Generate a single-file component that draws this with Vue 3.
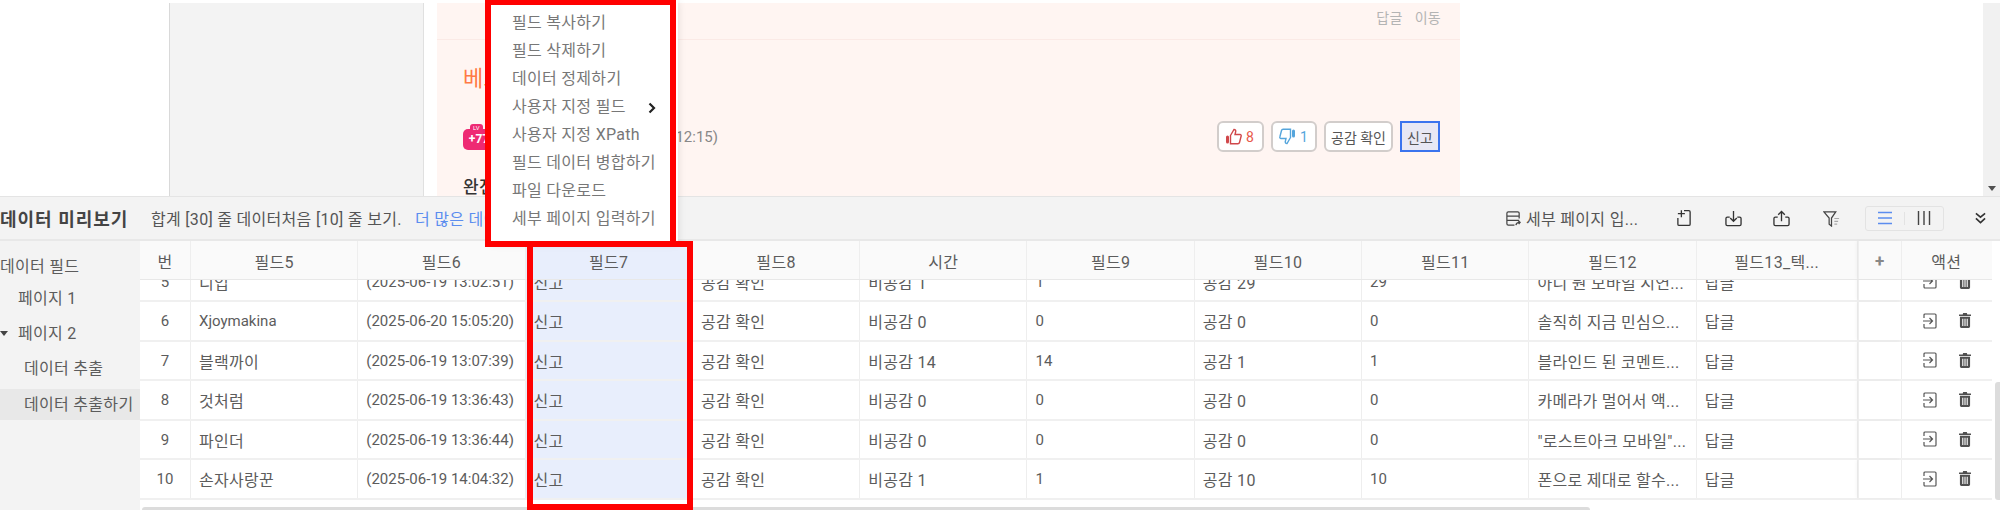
<script setup>
const columns = ['필드5', '필드6', '필드7', '필드8', '시간', '필드9', '필드10', '필드11', '필드12', '필드13_텍...']
const rows = [
  ['5', '디입', '(2025-06-19 13:02:51)', '신고', '공감 확인', '비공감 1', '1', '공감 29', '29', '아니 뭔 모바일 시연...', '답글'],
  ['6', 'Xjoymakina', '(2025-06-20 15:05:20)', '신고', '공감 확인', '비공감 0', '0', '공감 0', '0', '솔직히 지금 민심으...', '답글'],
  ['7', '블랙까이', '(2025-06-19 13:07:39)', '신고', '공감 확인', '비공감 14', '14', '공감 1', '1', '블라인드 된 코멘트...', '답글'],
  ['8', '것처럼', '(2025-06-19 13:36:43)', '신고', '공감 확인', '비공감 0', '0', '공감 0', '0', '카메라가 멀어서 액...', '답글'],
  ['9', '파인더', '(2025-06-19 13:36:44)', '신고', '공감 확인', '비공감 0', '0', '공감 0', '0', '"로스트아크 모바일"...', '답글'],
  ['10', '손자사랑꾼', '(2025-06-19 14:04:32)', '신고', '공감 확인', '비공감 1', '1', '공감 10', '10', '폰으로 제대로 할수...', '답글'],
]
const menu = ['필드 복사하기', '필드 삭제하기', '데이터 정제하기', '사용자 지정 필드', '사용자 지정 XPath', '필드 데이터 병합하기', '파일 다운로드', '세부 페이지 입력하기']
const isLatin = (v) => !/[\uac00-\ud7a3]/.test(v)
</script>

<template>
  <div class="page">
    <section class="site">
      <div class="blank"></div>
      <div class="rail"></div>
      <div class="pink">
        <div class="reply-row"><span>답글</span><span>이동</span></div>
        <div class="nick">베스</div>
        <div class="meta">
          <span class="level"><i>LV</i><b>+77</b></span>
          <span class="date">(2025-06-19 12:15)</span>
          <div class="votes">
            <button class="vote up">
              <svg width="17" height="17" viewBox="0 0 17 17" fill="none" stroke="#d0474a" stroke-width="1.4"><rect x="1" y="7.500" width="3" height="8" rx="1.500" fill="#d0474a" stroke="none"/><path d="M5.500 7.500 9 1.500c1.400 0 2 1 1.600 2.500L10 6.500h5c1 0 1.400.8 1.100 1.800l-1.600 6.200c-.2.8-.8 1.200-1.600 1.200H5.500z"/></svg>
              8
            </button>
            <button class="vote down">
              <svg width="17" height="17" viewBox="0 0 17 17" fill="none" stroke="#55a5dc" stroke-width="1.4"><rect x="13" y="1.500" width="3" height="8" rx="1.500" fill="#55a5dc" stroke="none"/><path d="M11.500 9.500 8 15.500c-1.400 0-2-1-1.600-2.500L7 10.500H2c-1 0-1.400-.8-1.100-1.800l1.600-6.200c.2-.8.800-1.200 1.600-1.200h7.400z"/></svg>
              1
            </button>
            <button class="vote">공감 확인</button>
            <button class="report">신고</button>
          </div>
        </div>
        <div class="body-text">완전</div>
      </div>
      <div class="blank-right"></div>
      <div class="site-scroll"><span class="arrow"></span></div>
    </section>

    <section class="preview">
      <header class="toolbar">
        <h2>데이터 미리보기</h2>
        <p>합계 [30] 줄 데이터처음 [10] 줄 보기.</p>
        <a>더 많은 데이터 보기</a>
        <div class="tools">
          <span class="detail">
            <svg width="17" height="17" viewBox="0 0 18 18" fill="none" stroke="#444" stroke-width="1.300"><path d="M15 9V3.500A1.500 1.500 0 0 0 13.500 2h-10A1.500 1.500 0 0 0 2 3.500v11A1.500 1.500 0 0 0 3.500 16H10M2 6.500h13M2 11h13"/><path d="M11.500 16c.5-2 1.800-3 4-3M14 11.500l2 1.500-1.500 2"/></svg>
            세부 페이지 입...
          </span>
          <svg class="add" width="14" height="18" viewBox="0 0 16 20" fill="none" stroke="#333" stroke-width="1.500"><path d="M8 1.500h5.500a1.500 1.500 0 0 1 1.500 1.500v14a1.500 1.500 0 0 1-1.500 1.500h-11A1.500 1.500 0 0 1 1 17v-7"/><path d="M1 5h8M5 1v8"/></svg>
          <svg width="17" height="17" viewBox="0 0 18 18" fill="none" stroke="#333" stroke-width="1.400"><path d="M5 7.500H2.500A1.500 1.500 0 0 0 1 9v6a1.500 1.500 0 0 0 1.500 1.500h13A1.500 1.500 0 0 0 17 15V9a1.500 1.500 0 0 0-1.500-1.500H13"/><path d="M9 1v11M5.500 8.500 9 12l3.500-3.500"/></svg>
          <svg class="upload" width="17" height="17" viewBox="0 0 18 18" fill="none" stroke="#333" stroke-width="1.400"><path d="M5 7.500H2.500A1.500 1.500 0 0 0 1 9v6a1.500 1.500 0 0 0 1.500 1.500h13A1.500 1.500 0 0 0 17 15V9a1.500 1.500 0 0 0-1.500-1.500H13"/><path d="M9 12V1.500M5.500 5 9 1.500 12.500 5"/></svg>
          <svg width="17" height="17" viewBox="0 0 18 18" fill="none" stroke="#444" stroke-width="1.300"><path d="M1 2h12.500L9 8.500V17l-2.500-2V8.500z"/><path d="M12 9h5M12 12h4M12 15h3" stroke="#aaa"/></svg>
          <div class="toggle">
            <svg width="14" height="14" viewBox="0 0 14 14" stroke="#5b8def" stroke-width="1.400"><path d="M0 1.500h14M0 7h14M0 12.500h14"/></svg>
            <i></i>
            <svg width="14" height="14" viewBox="0 0 14 14" stroke="#444" stroke-width="1.400"><path d="M1.500 0v14M7 0v14M12.500 0v14"/></svg>
          </div>
          <svg class="collapse" width="11" height="12" viewBox="0 0 12 13" fill="none" stroke="#333" stroke-width="1.800"><path d="m1 1.500 5 4 5-4M1 7l5 4.500L11 7"/></svg>
        </div>
      </header>

      <div class="content">
        <aside class="tree">
          <div class="node root">데이터 필드</div>
          <div class="node lvl1">페이지 1</div>
          <div class="node lvl1 open">페이지 2</div>
          <div class="node lvl2">데이터 추출</div>
          <div class="node lvl2 selected">데이터 추출하기</div>
        </aside>

        <div class="table">
          <div class="row head">
            <div class="cell num">번</div>
            <div v-for="(c, i) in columns" :key="c" class="cell col" :class="{ hl: i === 2, last: i === 9 }">{{ c }}</div>
            <div class="cell plus">+</div>
            <div class="cell action">액션</div>
          </div>
          <div class="tbody">
            <div class="scroller">
              <div v-for="r in rows" :key="r[0]" class="row">
                <div class="cell num latin">{{ r[0] }}</div>
                <div v-for="(v, i) in r.slice(1)" :key="i" class="cell col" :class="{ hl: i === 2, last: i === 9, latin: isLatin(v) }">{{ v }}</div>
                <div class="cell plus"></div>
                <div class="cell action">
                  <svg width="14" height="16" viewBox="0 0 14 16" fill="none" stroke="#555" stroke-width="1.200"><path d="M1 5V2a1 1 0 0 1 1-1h10a1 1 0 0 1 1 1v12a1 1 0 0 1-1 1H2a1 1 0 0 1-1-1v-3"/><path d="M0 8h9M6.500 5 9.500 8l-3 3"/></svg>
                  <svg width="12" height="15" viewBox="0 0 13 16" fill="#505050"><path d="M4.500 0h4l.5 1.500h4V3H0V1.500h4zM1 4h11v10.500c0 .8-.7 1.500-1.500 1.500h-8C1.700 16 1 15.300 1 14.500zm2.500 2v8h1.200V6zm2.400 0v8h1.200V6zm2.400 0v8h1.200V6z"/></svg>
                </div>
              </div>
            </div>
          </div>
          <div class="hbar"><span></span></div>
        </div>
        <div class="vbar"><span></span></div>
      </div>
    </section>

    <ul class="menu">
      <li v-for="m in menu" :key="m">
        {{ m }}
        <svg v-if="m === '사용자 지정 필드'" width="8" height="12" viewBox="0 0 8 12" fill="none" stroke="#222" stroke-width="2.200"><path d="m1.500 1.500 4.500 4.500-4.500 4.500"/></svg>
      </li>
    </ul>
    <div class="mark mark-menu"></div>
    <div class="mark mark-col"></div>
  </div>
</template>

<style>
html, body { margin: 0; padding: 0; background: #fff; }
</style>

<style scoped>
.page {
  position: relative;
  width: 2000px;
  height: 510px;
  overflow: hidden;
  font-family: Roboto, "Noto Sans CJK KR", sans-serif;
  font-size: 16px;
  letter-spacing: .3px;
  color: #5c5c5c;
  background: #fff;
}
.site { display: flex; height: 193px; padding-top: 3px; }
.blank { width: 169px; border-right: 1px solid #d9d9d9; }
.rail { width: 253px; background: #f3f3f3; border-right: 1px solid #e0e0e0; }
.pink { width: 1023px; margin-left: 13px; background: #fff5f2; padding: 0 0 0 26px; box-sizing: border-box; overflow: hidden; }
.blank-right { width: 523px; }
.site-scroll { width: 17px; background: #f1f1f1; position: relative; }
.arrow { position: absolute; left: 5px; bottom: 5px; border: 4px solid transparent; border-top: 5px solid #505050; border-bottom: 0; }

.reply-row { height: 37px; margin-left: -26px; padding: 4px 19px 0 0; border-bottom: 1px solid #fbeae6; display: flex; justify-content: flex-end; gap: 12px; font-size: 14px; color: #b4b4b4; box-sizing: border-box; }
.nick { margin-top: 24px; font-size: 22px; line-height: 30px; color: #ff7a45; }
.meta { display: flex; align-items: center; margin-top: 27px; height: 31px; }
.level { width: 32px; height: 21px; margin-top: 5px; border-radius: 5px; background: #ee2a73; color: #fff; position: relative; flex: none; display: flex; align-items: center; justify-content: center; font-size: 12px; line-height: 1; letter-spacing: 0; }
.level i { position: absolute; top: -5px; left: 7px; padding: 0 3px; background: #ee2a73; border-radius: 3px 3px 0 0; font-style: normal; font-size: 6px; line-height: 7px; }
.level b { font-weight: 700; white-space: nowrap; }
.date { margin-left: 81px; font-size: 15px; color: #888; white-space: nowrap; width: 142px; flex: none; text-align: right; letter-spacing: 0; }
.votes { margin-left: auto; margin-right: 20px; display: flex; gap: 7px; align-items: stretch; height: 31px; }
.vote { height: 31px; padding: 0 6px; display: flex; align-items: center; gap: 4px; border: 2px solid #d2cdcb; border-radius: 6px; background: #fff; color: #555; font: inherit; font-size: 14px; box-sizing: border-box; white-space: nowrap; }
.vote.up { color: #e8594a; width: 47px; }
.vote.down { color: #55a5dc; width: 46px; }
.vote:nth-child(3) { width: 69px; padding: 0; justify-content: center; }
.report { width: 40px; height: 31px; border: 2px solid #3b74ee; background: #e8e8f4; padding: 0; font: inherit; font-size: 14px; color: #555; box-sizing: border-box; }
.body-text { margin-top: 23px; font-size: 17px; font-weight: 500; color: #333; line-height: 24px; }

.preview { height: 314px; background: #f3f3f3; border-top: 1px solid #e4e4e4; box-sizing: border-box; }
.toolbar { height: 44px; display: flex; align-items: center; box-sizing: border-box; border-bottom: 2px solid #e8e8e8; }
.toolbar h2 { margin: 0; font-size: 18px; letter-spacing: 1px; font-weight: 700; color: #444; white-space: nowrap; width: 151px; }
.toolbar p { margin: 0; font-size: 16px; color: #555; white-space: nowrap; width: 264px; }
.toolbar a { color: #5b8def; font-size: 16px; white-space: nowrap; }
.tools { margin-left: auto; display: flex; align-items: center; gap: 31px; padding-right: 14px; }
.detail { display: flex; align-items: center; gap: 4px; width: 141px; color: #555; font-size: 16px; white-space: nowrap; }
.add { margin-right: 3px; }
.upload { margin-right: 2px; }
.toggle { display: flex; align-items: center; height: 25px; width: 79px; box-sizing: border-box; border: 1px solid #e3e3e3; border-radius: 3px; justify-content: space-between; padding: 0 12px; margin-left: -6px; }
.toggle i { width: 1px; height: 13px; background: #e3e3e3; }

.content { display: flex; height: 269px; }
.tree { width: 140px; flex: none; padding-top: 13px; box-sizing: border-box; overflow: hidden; }
.node { height: 35px; line-height: 35px; white-space: nowrap; position: relative; }
.root { height: 26.500px; line-height: 26.500px; }
.lvl1 { padding-left: 18px; }
.lvl2 { padding-left: 24px; }
.open::before { content: ""; position: absolute; left: 0; top: 15px; border: 4px solid transparent; border-top: 5px solid #444; border-bottom: 0; }
.selected { background: #e8e8e8; height: 31px; line-height: 31px; margin-top: 3.500px; }

.table { width: 1852px; flex: none; background: #fff; display: flex; flex-direction: column; position: relative; }
.row { display: flex; height: 39.500px; box-sizing: border-box; border-bottom: 2px solid #f0f0f0; }
.cell { flex: none; box-sizing: border-box; border-right: 1px solid #eee; padding: 1px 8px 0; display: flex; align-items: center; white-space: nowrap; overflow: hidden; }
.latin { font-size: 15px; letter-spacing: 0; }
.num { width: 51px; justify-content: center; padding: 1px 0 0; }
.col { width: 167.300px; }
.col.last { width: 161px; }
.plus { width: 44px; justify-content: center; border-left: 1px solid #eee; box-shadow: -2px 0 3px rgba(0,0,0,.03); color: #888; font-weight: 700; font-size: 17px; padding: 0; background: #fff; }
.action { width: 89px; padding: 0 20px 0 21px; justify-content: space-between; border-right: 0; }
.head { background: #fafafa; height: 39px; border-bottom: 1px solid #e8e8e8; }
.head .cell { background: #fafafa; justify-content: center; padding-top: 2px; }
.head .action { padding: 2px 0 0; }
.hl, .head .hl { background: #e8eefc; }
.tbody { height: 223px; overflow: hidden; }
.scroller { margin-top: -17.500px; }
.hbar { flex: 1; position: relative; background: #fff; }
.hbar span { position: absolute; left: 2px; top: 4px; bottom: 0; width: 1448px; background: #dcdcdc; border-radius: 4px 4px 0 0; }
.vbar { width: 8px; flex: none; position: relative; background: #fff; }
.vbar span { position: absolute; right: 0; top: 141px; height: 118px; width: 5px; background: #dcdcdc; border-radius: 3px 0 0 3px; }

.menu { position: absolute; left: 491px; top: 0; width: 187px; height: 242px; margin: 0; padding: 9px 0 0; list-style: none; background: #fff; box-shadow: 0 2px 8px rgba(0,0,0,.12); box-sizing: border-box; color: #777; }
.menu li { height: 28px; line-height: 28px; padding-left: 21px; white-space: nowrap; position: relative; }
.menu svg { position: absolute; left: 157px; top: 9px; }
.mark { position: absolute; border: solid #f00; box-sizing: border-box; pointer-events: none; }
.mark-menu { left: 485px; top: -1px; width: 191px; height: 248px; border-width: 6px; }
.mark-col { left: 527px; top: 241px; width: 166px; height: 269px; border-width: 6px; }
</style>
